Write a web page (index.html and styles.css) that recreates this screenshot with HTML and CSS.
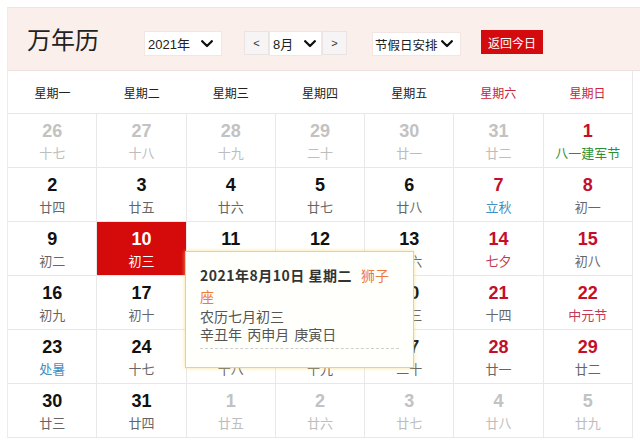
FILE: index.html
```html
<!DOCTYPE html>
<html lang="zh-CN">
<head>
<meta charset="utf-8">
<title>万年历</title>
<link rel="stylesheet" href="styles.css">
</head>
<body>
<div class="cal">
  <div class="head">
    <h1 class="title">万年历</h1>
    <div class="sel sel-year"><span>2021年</span><svg class="chev" viewBox="0 0 12 8" width="12" height="8"><polyline points="1.2,1.2 6,6 10.8,1.2"/></svg></div>
    <div class="month-group">
      <div class="arrow">&lt;</div>
      <div class="sel sel-month"><span>8月</span><svg class="chev" viewBox="0 0 12 8" width="12" height="8"><polyline points="1.2,1.2 6,6 10.8,1.2"/></svg></div>
      <div class="arrow">&gt;</div>
    </div>
    <div class="sel sel-holiday"><span>节假日安排</span><svg class="chev" viewBox="0 0 12 8" width="12" height="8"><polyline points="1.2,1.2 6,6 10.8,1.2"/></svg></div>
    <div class="today">返回今日</div>
  </div>
  <div class="main">
    <div class="weekdays">
      <div>星期一</div><div>星期二</div><div>星期三</div><div>星期四</div><div>星期五</div><div class="we">星期六</div><div class="we">星期日</div>
    </div>
    <div class="days">
      <div class="cell other"><b>26</b><i>十七</i></div>
      <div class="cell other"><b>27</b><i>十八</i></div>
      <div class="cell other"><b>28</b><i>十九</i></div>
      <div class="cell other"><b>29</b><i>二十</i></div>
      <div class="cell other"><b>30</b><i>廿一</i></div>
      <div class="cell other"><b>31</b><i>廿二</i></div>
      <div class="cell red"><b>1</b><i class="fest-green">八一建军节</i></div>

      <div class="cell"><b>2</b><i>廿四</i></div>
      <div class="cell"><b>3</b><i>廿五</i></div>
      <div class="cell"><b>4</b><i>廿六</i></div>
      <div class="cell"><b>5</b><i>廿七</i></div>
      <div class="cell"><b>6</b><i>廿八</i></div>
      <div class="cell red"><b>7</b><i class="term">立秋</i></div>
      <div class="cell red"><b>8</b><i>初一</i></div>

      <div class="cell"><b>9</b><i>初二</i></div>
      <div class="cell selected"><b>10</b><i>初三</i></div>
      <div class="cell"><b>11</b><i>初四</i></div>
      <div class="cell"><b>12</b><i>初五</i></div>
      <div class="cell"><b>13</b><i>初六</i></div>
      <div class="cell red"><b>14</b><i class="fest-red">七夕</i></div>
      <div class="cell red"><b>15</b><i>初八</i></div>

      <div class="cell"><b>16</b><i>初九</i></div>
      <div class="cell"><b>17</b><i>初十</i></div>
      <div class="cell"><b>18</b><i>十一</i></div>
      <div class="cell"><b>19</b><i>十二</i></div>
      <div class="cell"><b>20</b><i>十三</i></div>
      <div class="cell red"><b>21</b><i>十四</i></div>
      <div class="cell red"><b>22</b><i class="fest-red">中元节</i></div>

      <div class="cell"><b>23</b><i class="term">处暑</i></div>
      <div class="cell"><b>24</b><i>十七</i></div>
      <div class="cell"><b>25</b><i>十八</i></div>
      <div class="cell"><b>26</b><i>十九</i></div>
      <div class="cell"><b>27</b><i>二十</i></div>
      <div class="cell red"><b>28</b><i>廿一</i></div>
      <div class="cell red"><b>29</b><i>廿二</i></div>

      <div class="cell"><b>30</b><i>廿三</i></div>
      <div class="cell"><b>31</b><i>廿四</i></div>
      <div class="cell other"><b>1</b><i>廿五</i></div>
      <div class="cell other"><b>2</b><i>廿六</i></div>
      <div class="cell other"><b>3</b><i>廿七</i></div>
      <div class="cell other"><b>4</b><i>廿八</i></div>
      <div class="cell other"><b>5</b><i>廿九</i></div>
    </div>
    <div class="tip">
      <p class="tip-date">2021年8月10日 星期二<span class="star">狮子座</span></p>
      <p class="tip-line">农历七月初三</p>
      <p class="tip-line gz">辛丑年&nbsp;丙申月&nbsp;庚寅日</p>
      <div class="tip-sep"></div>
    </div>
  </div>
</div>
</body>
</html>
```
FILE: styles.css
```css
html, body {
  margin: 0;
  padding: 0;
  background: #fff;
}
body {
  font-family: "Liberation Sans", "Noto Sans CJK SC", sans-serif;
  color: #333;
  overflow: hidden;
}
.cal {
  margin: 7px 0 0 7px;
  border-left: 1px solid #ececec;
  border-top: 1px solid #efe6e3;
}
.head {
  height: 62px;
  background: #fbefeb;
  border-bottom: 1px solid #efe2de;
  display: flex;
  align-items: flex-start;
}
.title {
  margin: 16px 0 0 19px;
  font-family: "Noto Sans CJK SC", sans-serif;
  font-weight: 400;
  font-size: 24px;
  line-height: 30px;
  color: #222;
  width: 117px;
}
.sel {
  display: flex;
  align-items: center;
  justify-content: space-between;
  box-sizing: border-box;
  height: 25px;
  background: #fff;
  border: 1px solid #f1e6e3;
  font-size: 13px;
  color: #222;
  font-family: "Liberation Sans", "Noto Sans CJK SC", sans-serif;
}
.chev {
  fill: none;
  stroke: #111;
  stroke-width: 2.3;
  stroke-linecap: round;
  stroke-linejoin: round;
}
.sel-year {
  margin-top: 23px;
  width: 78px;
  padding: 0 8px 0 3px;
}
.month-group {
  display: flex;
  margin: 23px 0 0 22px;
}
.arrow {
  box-sizing: border-box;
  width: 25px;
  height: 24px;
  background: #f6f4f4;
  border: 1px solid #ebe3e1;
  font-size: 11px;
  color: #333;
  display: flex;
  align-items: center;
  justify-content: center;
}
.sel-month {
  width: 53px;
  padding: 0 5px 0 3px;
}
.sel-holiday {
  margin: 24px 0 0 25px;
  width: 89px;
  height: 24px;
  padding: 0 7px 0 2px;
  font-size: 12.5px;
  font-family: "Noto Sans CJK SC", sans-serif;
}
.today {
  margin: 22px 0 0 20px;
  width: 62px;
  height: 24px;
  background: #d30b0f;
  color: #fff;
  font-family: "Noto Sans CJK SC", sans-serif;
  font-size: 12px;
  display: flex;
  align-items: center;
  justify-content: center;
}
.main {
  position: relative;
  width: 625px;
}
.weekdays {
  display: grid;
  grid-template-columns: repeat(7, 1fr);
  height: 42px;
  border-right: 1px solid #e8e8e8;
  border-bottom: 1px solid #e8e8e8;
  font-family: "Noto Sans CJK SC", sans-serif;
  font-size: 12px;
  color: #222;
}
.weekdays div {
  display: flex;
  align-items: center;
  justify-content: center;
}
.weekdays .we {
  color: #c8243c;
}
.days {
  display: grid;
  grid-template-columns: repeat(7, 1fr);
}
.cell {
  height: 46px;
  border-right: 1px solid #e8e8e8;
  border-bottom: 1px solid #e8e8e8;
  display: flex;
  flex-direction: column;
  align-items: center;
  padding-top: 7px;
  box-sizing: content-box;
}
.cell b {
  font-family: "Liberation Sans", sans-serif;
  font-weight: 700;
  font-size: 18px;
  line-height: 20px;
  color: #111;
}
.cell i {
  font-style: normal;
  font-family: "Noto Sans CJK SC", sans-serif;
  font-size: 13px;
  line-height: 18px;
  margin-top: 3px;
  color: #666;
}
.cell.red b {
  color: #c40f2a;
}
.cell.other b {
  color: #c2c2c2;
}
.cell.other i {
  color: #bdbdbd;
}
.cell i.fest-green {
  color: #2f8f2f;
}
.cell i.term {
  color: #3f8fbf;
}
.cell i.fest-red {
  color: #c23a55;
}
.cell.selected {
  background: #d50b0b;
}
.cell.selected b,
.cell.selected i {
  color: #fff;
}
.tip {
  position: absolute;
  left: 177px;
  top: 180px;
  width: 199px;
  box-sizing: content-box;
  padding: 13px 14px 18px 14px;
  background: #fffffb;
  border: 1px solid #f0d36a;
  box-shadow: 0 0 4px rgba(245, 215, 110, 0.7);
  font-family: "Noto Sans CJK SC", sans-serif;
}
.tip p {
  margin: 0;
}
.tip-date {
  font-size: 14px;
  font-weight: 700;
  line-height: 21px;
  letter-spacing: 0.5px;
  color: #333;
}
.star {
  font-weight: 400;
  color: #ef7b3e;
  margin-left: 9px;
  letter-spacing: 0;
}
.tip-line {
  font-size: 14px;
  line-height: 18px;
  color: #555;
}
.tip-line.gz {
  word-spacing: 2px;
}
.tip-sep {
  margin-top: 5px;
  border-top: 1px dashed #cfcfcf;
}
```
